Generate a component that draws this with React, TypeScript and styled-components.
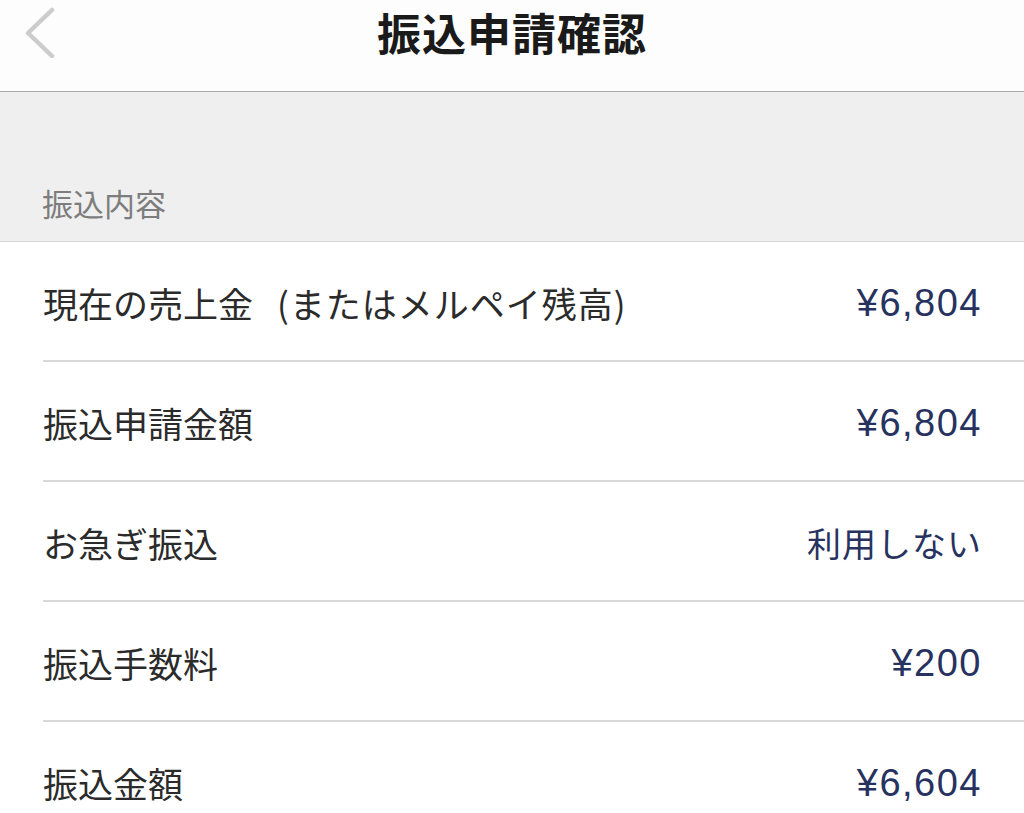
import React from "react";
import styled, { createGlobalStyle } from "styled-components";

const Global = createGlobalStyle`
  html, body { margin: 0; padding: 0; background: #ffffff; }
  body { font-family: "Noto Sans CJK JP", "Noto Sans", sans-serif; }
`;

const Page = styled.div`
  width: 1024px;
  min-height: 813px;
  background: #ffffff;
  overflow: hidden;
`;

const Header = styled.header`
  height: 91px;
  background: #fdfdfd;
  border-bottom: 1px solid #a9a9a9;
  display: grid;
  grid-template-columns: 120px 1fr 120px;
  align-items: start;
`;

const BackButton = styled.div`
  padding: 6px 0 0 22px;
  height: 52px;
  display: flex;
`;

const Title = styled.h1`
  margin: 0;
  padding-top: 2px;
  text-align: center;
  font-family: "Noto Sans CJK JP", sans-serif;
  font-weight: 700;
  font-size: 44px;
  line-height: 60px;
  color: #1a1a1a;
  letter-spacing: 1px;
`;

const SectionHeader = styled.div`
  height: 150px;
  box-sizing: border-box;
  background: #efefef;
  border-bottom: 1px solid #d6d6d6;
  display: flex;
  align-items: flex-end;
  padding: 0 0 17px 42px;
`;

const SectionLabel = styled.span`
  font-size: 31px;
  line-height: 42px;
  color: #7d7d7d;
`;

const List = styled.div`
  display: flex;
  flex-direction: column;
`;

const Row = styled.div`
  margin-left: 43px;
  height: 120px;
  box-sizing: border-box;
  border-bottom: 2px solid #d9d9d9;
  display: flex;
  align-items: center;
  justify-content: space-between;
  padding: 4px 42px 0 0;
`;

const Label = styled.span`
  font-size: 35px;
  line-height: 48px;
  color: #2b2b2b;
`;

const Note = styled.span`
  margin-left: 24px;
  letter-spacing: 1px;
`;

const Value = styled.span<{ $jp?: boolean }>`
  font-family: ${(p) =>
    p.$jp ? `"Noto Sans CJK JP", sans-serif` : `"Liberation Sans", Arial, sans-serif`};
  font-size: ${(p) => (p.$jp ? "34px" : "38px")};
  letter-spacing: ${(p) => (p.$jp ? "1px" : "1.5px")};
  line-height: 48px;
  color: #27325f;
`;

const Chevron = () => (
  <svg width="36" height="52" viewBox="0 0 36 52" fill="none">
    <path
      d="M30 4 L6 27 L30 50"
      stroke="#cccccc"
      strokeWidth="4.5"
      strokeLinecap="round"
      strokeLinejoin="round"
    />
  </svg>
);

const rows: { label: string; note?: string; value: string; jp?: boolean }[] = [
  { label: "現在の売上金", note: "(またはメルペイ残高)", value: "¥6,804" },
  { label: "振込申請金額", value: "¥6,804" },
  { label: "お急ぎ振込", value: "利用しない", jp: true },
  { label: "振込手数料", value: "¥200" },
  { label: "振込金額", value: "¥6,604" },
];

export default function App() {
  return (
    <Page>
      <Global />
      <Header>
        <BackButton>
          <Chevron />
        </BackButton>
        <Title>振込申請確認</Title>
        <div />
      </Header>
      <SectionHeader>
        <SectionLabel>振込内容</SectionLabel>
      </SectionHeader>
      <List>
        {rows.map((r, i) => (
          <Row key={i}>
            <Label>
              {r.label}
              {r.note && <Note>{r.note}</Note>}
            </Label>
            <Value $jp={r.jp}>{r.value}</Value>
          </Row>
        ))}
      </List>
    </Page>
  );
}
